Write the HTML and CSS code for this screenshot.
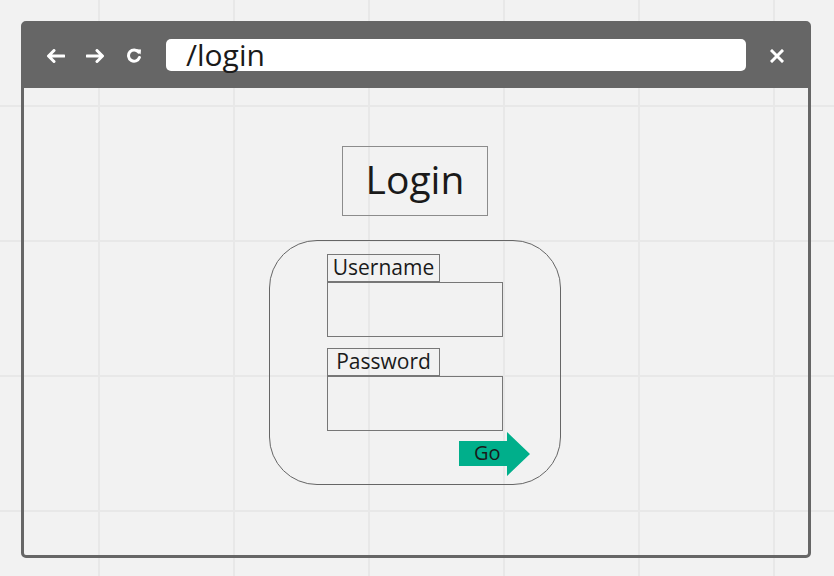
FILE: index.html
```html
<!DOCTYPE html>
<html>
<head>
<meta charset="utf-8">
<link rel="stylesheet" href="styles.css">
</head>
<body>
<div class="window">
  <div class="bar">
    <svg class="icon" width="19" height="14" viewBox="0 0 19 14"><path d="M18 7H3M8 1.5L2.5 7L8 12.5" fill="none" stroke="#fff" stroke-width="3" stroke-linecap="round" stroke-linejoin="round"/></svg>
    <svg class="icon" width="19" height="14" viewBox="0 0 19 14"><path d="M1 7H16M11 1.5L16.5 7L11 12.5" fill="none" stroke="#fff" stroke-width="3" stroke-linecap="round" stroke-linejoin="round"/></svg>
    <svg class="icon" width="17" height="15" viewBox="0 0 17 15"><path d="M12.6 4.2A5.6 5.6 0 1 0 13.4 9.5" fill="none" stroke="#fff" stroke-width="3" stroke-linecap="round"/><path d="M9.5 1.2L15 1.5L14.6 6.6Z" fill="#fff"/></svg>
    <div class="url">/login</div>
    <svg class="close" width="14" height="14" viewBox="0 0 14 14"><path d="M2 2L12 12M12 2L2 12" stroke="#fff" stroke-width="3" stroke-linecap="square"/></svg>
  </div>
  <div class="content">
    <div class="title">Login</div>
    <div class="panel">
      <div class="form">
        <div class="label">Username</div>
        <div class="input"></div>
        <div class="label second">Password</div>
        <div class="input"></div>
        <div class="go">Go</div>
      </div>
    </div>
  </div>
</div>
</body>
</html>
```

FILE: styles.css
```css
html, body {
  margin: 0;
  padding: 0;
}
body {
  width: 834px;
  height: 576px;
  overflow: hidden;
  background-color: #f2f2f2;
  background-image:
    linear-gradient(to right, #e8e8e8 0, #e8e8e8 2px, transparent 2px),
    linear-gradient(to bottom, #e8e8e8 0, #e8e8e8 2px, transparent 2px);
  background-size: 135px 135px, 135px 135px;
  background-position: 98px 0, 0 105px;
  font-family: "Open Sans", "Noto Sans", sans-serif;
  color: #1a1a1a;
  padding: 21px 0 0 21px;
  box-sizing: border-box;
}
.window {
  width: 790px;
  height: 537px;
  box-sizing: border-box;
  border: 3px solid #666666;
  border-radius: 5px;
  display: flex;
  flex-direction: column;
}
.bar {
  height: 64px;
  flex: none;
  background: #666666;
  display: flex;
  align-items: center;
  padding: 0 24px 0 22px;
}
.icon {
  margin-right: 21px;
  flex: none;
  margin-top: -1px;
}
.icon:nth-child(3) {
  margin-right: 23px;
}
.url {
  width: 580px;
  height: 32px;
  background: #ffffff;
  border-radius: 5px;
  box-sizing: border-box;
  padding-left: 20px;
  font-size: 30px;
  line-height: 32px;
  color: #1a1a1a;
  margin-top: -2px;
}
.close {
  margin-left: 24px;
  flex: none;
  margin-top: -1px;
}
.content {
  flex: 1;
  display: flex;
  flex-direction: column;
  align-items: center;
  padding-right: 2px;
}
.title {
  margin-top: 58px;
  width: 146px;
  height: 70px;
  box-sizing: border-box;
  border: 1px solid #8c8c8c;
  font-size: 39px;
  line-height: 63px;
  text-align: center;
}
.panel {
  margin-top: 24px;
  width: 292px;
  height: 245px;
  box-sizing: border-box;
  border: 1px solid #666666;
  border-radius: 48px;
  padding: 13px 0 0 57px;
}
.form {
  display: flex;
  flex-direction: column;
  width: 176px;
}
.label {
  width: 113px;
  height: 28px;
  box-sizing: border-box;
  border: 1px solid #777777;
  font-size: 21px;
  line-height: 24px;
  text-align: center;
}
.second {
  margin-top: 11px;
}
.input {
  width: 176px;
  height: 55px;
  box-sizing: border-box;
  border: 1px solid #777777;
}
.go {
  margin-left: 132px;
  margin-top: 1px;
  width: 71px;
  height: 44px;
  background: #00af8b;
  clip-path: polygon(0 9px, 48px 9px, 48px 0, 100% 50%, 48px 100%, 48px 34px, 0 34px);
  font-size: 20px;
  line-height: 42px;
  padding-left: 15px;
  box-sizing: border-box;
}
```
